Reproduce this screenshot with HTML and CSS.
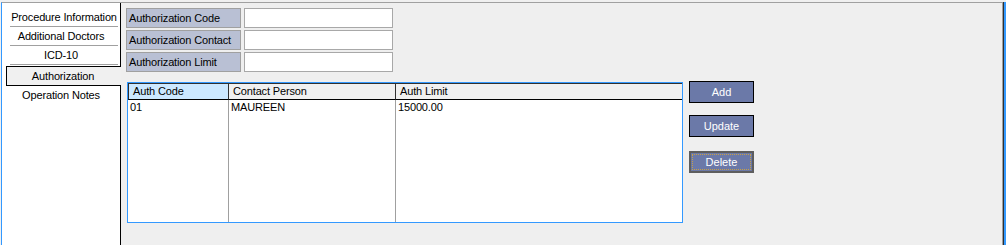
FILE: index.html
```html
<!DOCTYPE html>
<html lang="en">
<head>
  <meta charset="UTF-8">
  <title>Authorization</title>
  <link rel="stylesheet" href="styles.css">
</head>
<body>
  <div class="frame">
    <div class="sidebar">
      <div class="tab">Procedure Information</div>
      <div class="tab">Additional Doctors</div>
      <div class="tab">ICD-10</div>
      <div class="tab selected">Authorization</div>
      <div class="tab plain">Operation Notes</div>
    </div>

    <div class="main">
      <div class="form-row">
        <div class="label">Authorization Code</div>
        <input class="field" type="text">
      </div>
      <div class="form-row">
        <div class="label">Authorization Contact</div>
        <input class="field" type="text">
      </div>
      <div class="form-row">
        <div class="label">Authorization Limit</div>
        <input class="field" type="text">
      </div>

      <div class="lower">
        <div class="grid">
          <div class="col col-code">
            <div class="head active">Auth Code</div>
            <div class="cell">01</div>
          </div>
          <div class="col col-contact">
            <div class="head">Contact Person</div>
            <div class="cell">MAUREEN</div>
          </div>
          <div class="col col-limit">
            <div class="head">Auth Limit</div>
            <div class="cell">15000.00</div>
          </div>
        </div>

        <div class="buttons">
          <button class="btn">Add</button>
          <button class="btn">Update</button>
          <button class="btn focused"><span>Delete</span></button>
        </div>
      </div>
    </div>
  </div>
</body>
</html>
```

FILE: styles.css
```css
body {
  margin: 0;
  background: #f0f0f0;
  font-family: "Liberation Sans", Arial, sans-serif;
  font-size: 11px;
  letter-spacing: -0.15px;
  color: #000;
  overflow: hidden;
}

.frame {
  display: flex;
  width: 1000px;
  height: 242px;
  margin: 2px 0 0 1px;
  border-top: 1px solid #a0a0a0;
  border-left: 1px solid #3399ff;
  border-right: 1px solid #a0a0a0;
  background: #efefef;
  box-shadow: 1px 0 0 #303030, 3px 0 0 #3399ff;
}

/* left tab list */
.sidebar {
  width: 118px;
  flex-shrink: 0;
  background: #fff;
  border-right: 1px solid #000;
  padding-top: 5px;
}

.tab {
  height: 18px;
  line-height: 18px;
  margin: 0 2px 0 8px;
  border-bottom: 1px solid #a0a0a0;
  text-align: center;
  padding-right: 6px;
  white-space: nowrap;
}

.tab:first-child {
  padding-right: 0;
}

.tab.selected {
  margin: 1px -1px 0 4px;
  border: 1px solid #000;
  border-right: none;
  background: #f0f0f0;
  padding-right: 2px;
}

.tab.plain {
  border-bottom: none;
}

/* form */
.main {
  flex: 1;
  padding: 5px 0 0 5px;
}

.form-row {
  display: flex;
  gap: 2px;
  margin-bottom: 2px;
}

.label {
  width: 111px;
  height: 18px;
  line-height: 18px;
  padding-left: 2px;
  border: 1px solid #a0a0a0;
  background: #b9c0d4;
  white-space: nowrap;
}

.field {
  width: 149px;
  height: 20px;
  margin: 0 0 0 1px;
  padding: 0 2px;
  border: 1px solid #a8a8a8;
  background: #fff;
  box-sizing: border-box;
  font: inherit;
}

.lower {
  display: flex;
  align-items: flex-start;
  margin-top: 9px;
}

/* list grid */
.grid {
  display: flex;
  width: 554px;
  height: 139px;
  margin: 1px 0 0 1px;
  border: 1px solid #3399ff;
  background: #fff;
}

.col {
  border-right: 1px solid #a0a0a0;
}

.col-code {
  width: 100px;
}

.col-contact {
  width: 166px;
}

.col-limit {
  flex: 1;
  border-right: none;
}

.head {
  height: 15px;
  line-height: 15px;
  padding-left: 4px;
  border-top: 1px solid #303030;
  border-bottom: 1px solid #000;
  border-right: 1px solid #303030;
  margin-right: -1px;
  background: #f0f0f0;
  white-space: nowrap;
}

.col-limit .head {
  border-right: none;
  margin-right: 0;
}

.head.active {
  background: #cce8ff;
  border-left: 1px solid #303030;
  padding-left: 4px;
}

.cell {
  height: 15px;
  line-height: 15px;
  padding-left: 2px;
}

/* action buttons */
.buttons {
  display: flex;
  flex-direction: column;
  margin-left: 6px;
}

.btn {
  width: 65px;
  height: 22px;
  margin-bottom: 12px;
  padding: 0;
  border: 1px solid #000;
  background: #6b79a8;
  color: #fff;
  font: inherit;
  box-sizing: border-box;
}

.btn:nth-child(2) {
  margin-bottom: 14px;
}

.btn.focused {
  border: 2px solid #5e5e5e;
  padding: 1px;
}

.btn.focused span {
  display: block;
  height: 14px;
  line-height: 14px;
  border: 1px dotted #c8a048;
}
```
